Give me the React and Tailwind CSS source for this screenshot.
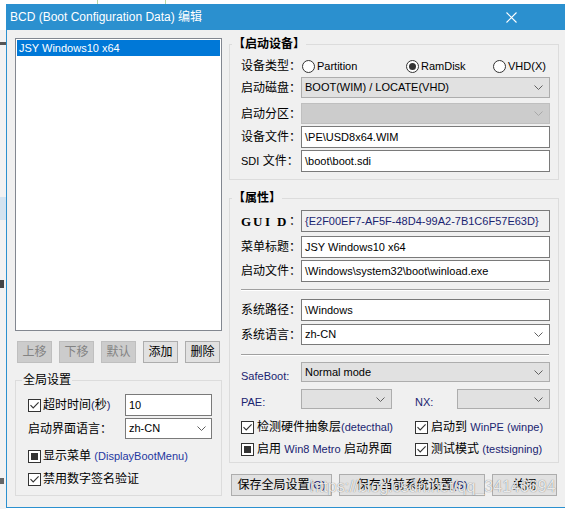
import React from "react";

function Check({ state = "checked" }) {
  return (
    <span className="flex h-[13px] w-[13px] shrink-0 items-center justify-center border border-[#333333] bg-white">
      {state === "checked" && (
        <svg width="11" height="11" viewBox="0 0 11 11">
          <path d="M1.5 5.2 L4.2 8 L9.6 2.4" fill="none" stroke="#333333" strokeWidth="1.1" />
        </svg>
      )}
      {state === "ind" && <span className="h-[7px] w-[7px] bg-[#333333]" />}
    </span>
  );
}

function Radio({ checked }) {
  return (
    <span className="flex h-[13px] w-[13px] shrink-0 items-center justify-center rounded-full border border-[#333333] bg-white">
      {checked && <span className="h-[7px] w-[7px] rounded-full bg-[#333333]" />}
    </span>
  );
}

function Chevron({ color = "#606060" }) {
  return (
    <svg width="9" height="5" viewBox="0 0 9 5" className="shrink-0">
      <path d="M0.5 0.5 L4.5 4.5 L8.5 0.5" fill="none" stroke={color} strokeWidth="1" />
    </svg>
  );
}

function L({ children, className = "" }) {
  return <span className={"text-[11px] " + className}>{children}</span>;
}

function Btn({ children, disabled, className = "" }) {
  return (
    <div
      className={
        "flex h-[22px] items-center justify-center border " +
        (disabled
          ? "border-[#bfbfbf] bg-[#cccccc] text-[#838383] "
          : "border-[#adadad] bg-[#e1e1e1] text-black ") +
        className
      }
    >
      {children}
    </div>
  );
}

const NAVY = "text-[#1a2470]";
const BLUE = "text-[#1f37a0]";

export default function App() {
  return (
    <div className="relative h-[509px] w-[565px] overflow-hidden bg-white font-['Liberation_Sans','Noto_Sans_CJK_SC',sans-serif] text-[12px] leading-none text-black">
      {/* top strip (behind window) */}
      <div className="flex h-[4px] bg-white">
        <div className="ml-[97px] h-[4px] w-[69px] border-x border-[#b8d8a0]" />
      </div>
      <div className="flex h-[505px]">
        {/* left strip (behind window) */}
        <div className="flex w-[6px] flex-col bg-[#f2f2f2]">
          <div className="h-[26px] bg-white" />
          <div className="mt-[12px] h-[3px] bg-[#555555]" />
          <div className="mt-[152px] h-[23px] bg-[#d3e3f0]" />
          <div className="mt-[60px] h-[8px] w-[4px] bg-[#444444]" />
          <div className="mt-[190px] h-[6px] w-[4px] bg-[#666666]" />
        </div>

        {/* window */}
        <div className="flex h-[504px] flex-1 flex-col">
          <div className="flex h-[26px] shrink-0 items-center justify-between bg-[#2b90cf] pl-[4px] pr-[48px] text-white">
            <span className="text-[12px]">BCD (Boot Configuration Data) 编辑</span>
            <svg width="11" height="11" viewBox="0 0 11 11">
              <path d="M0.5 0.5 L10.5 10.5 M10.5 0.5 L0.5 10.5" stroke="white" strokeWidth="1.1" />
            </svg>
          </div>

          <div className="flex h-[478px] items-start gap-[7px] border-b border-l border-[#2b90cf] bg-[#f0f0f0] pl-[8px]">
            {/* left column */}
            <div className="flex w-[207px] shrink-0 flex-col pt-[8px]">
              <div className="h-[293px] border border-[#828790] bg-white p-[1px]">
                <div className="flex h-[16px] items-center bg-[#0078d7] pl-[2px] text-white">
                  <L>JSY Windows10 x64</L>
                </div>
              </div>
              <div className="mt-[10px] flex justify-between px-[2px]">
                <Btn disabled className="w-[35px]">上移</Btn>
                <Btn disabled className="w-[35px]">下移</Btn>
                <Btn disabled className="w-[35px]">默认</Btn>
                <Btn className="w-[35px]">添加</Btn>
                <Btn className="w-[35px]">删除</Btn>
              </div>
              <fieldset className="mt-[9px] border border-[#dcdcdc] px-0 pb-[8px]">
                <legend className="ml-[6px] px-[1px] leading-[16px]">全局设置</legend>
                <div className="flex flex-col pl-[12px] pr-[9px]">
                  <div className="mt-[6px] flex h-[22px] items-center justify-between">
                    <div className="flex items-center">
                      <Check />
                      <span className="ml-[2px]">超时时间<L className={NAVY}>(</L>秒<L className={NAVY}>)</L></span>
                    </div>
                    <div className="h-[22px] w-[87px] border border-[#7a7a7a] bg-white pl-[3px] pt-[4px]">
                      <L>10</L>
                    </div>
                  </div>
                  <div className="mt-[2px] flex h-[21px] items-center justify-between">
                    <span>启动界面语言：</span>
                    <div className="flex h-[21px] w-[87px] items-center justify-between border border-[#7a7a7a] bg-white pl-[3px] pr-[5px]">
                      <L>zh-CN</L>
                      <Chevron />
                    </div>
                  </div>
                  <div className="mt-[9px] flex h-[16px] items-center">
                    <Check state="ind" />
                    <span className="ml-[2px]">显示菜单 <L className={BLUE}>(DisplayBootMenu)</L></span>
                  </div>
                  <div className="mt-[7px] flex h-[16px] items-center">
                    <Check />
                    <span className="ml-[2px]">禁用数字签名验证</span>
                  </div>
                </div>
              </fieldset>
            </div>

            {/* right column */}
            <div className="flex w-[330px] shrink-0 flex-col pt-[6px]">
              <fieldset className="border border-[#dcdcdc] px-0 pb-[7px]">
                <legend className="ml-[2px] px-[1px] font-bold leading-[16px]">【启动设备】</legend>
                <div className="flex flex-col pl-[11px] pr-[8px]">
                  <div className="mt-[6px] flex h-[16px] items-center">
                    <span className="w-[60px] shrink-0">设备类型：</span>
                    <div className="flex w-[105px] items-center pl-[1px]">
                      <Radio />
                      <L className="ml-[2px]">Partition</L>
                    </div>
                    <div className="flex w-[87px] items-center">
                      <Radio checked />
                      <L className="ml-[2px]">RamDisk</L>
                    </div>
                    <div className="flex items-center">
                      <Radio />
                      <L className="ml-[2px]">VHD(X)</L>
                    </div>
                  </div>
                  <div className="mt-[3px] flex h-[21px] items-center">
                    <span className="w-[60px] shrink-0">启动磁盘：</span>
                    <div className="flex h-[21px] flex-1 items-center justify-between border border-[#adadad] bg-[#e1e1e1] pl-[3px] pr-[6px]">
                      <L>BOOT(WIM) / LOCATE(VHD)</L>
                      <Chevron />
                    </div>
                  </div>
                  <div className="mt-[5px] flex h-[21px] items-center">
                    <span className="w-[60px] shrink-0">启动分区：</span>
                    <div className="flex h-[21px] flex-1 items-center justify-end border border-[#bfbfbf] bg-[#cccccc] pr-[6px]">
                      <Chevron color="#a8a8a8" />
                    </div>
                  </div>
                  <div className="mt-[2px] flex h-[22px] items-center">
                    <span className="w-[60px] shrink-0">设备文件：</span>
                    <div className="flex h-[22px] flex-1 items-center border border-[#7a7a7a] bg-white pl-[3px]">
                      <L>\PE\USD8x64.WIM</L>
                    </div>
                  </div>
                  <div className="mt-[2px] flex h-[22px] items-center">
                    <span className="w-[60px] shrink-0"><L>SDI</L> 文件：</span>
                    <div className="flex h-[22px] flex-1 items-center border border-[#7a7a7a] bg-white pl-[3px]">
                      <L>\boot\boot.sdi</L>
                    </div>
                  </div>
                </div>
              </fieldset>

              <fieldset className="mt-[10px] border border-[#dcdcdc] px-0 pb-[5px]">
                <legend className="ml-[2px] px-[1px] font-bold leading-[16px]">【属性】</legend>
                <div className="flex flex-col pl-[11px] pr-[8px]">
                  <div className="mt-[4px] flex h-[22px] items-center">
                    <span className="flex w-[60px] shrink-0 items-center">
                      <span className="flex font-['Liberation_Serif',serif] text-[13px] font-bold">
                        <span className="w-[12px]">G</span>
                        <span className="w-[12px]">U</span>
                        <span className="w-[12px]">I</span>
                        <span className="w-[12px]">D</span>
                      </span>
                      <span>：</span>
                    </span>
                    <div className="flex h-[22px] flex-1 items-center border border-[#7a7a7a] bg-[#f0f0f0] pl-[3px]">
                      <L className={NAVY}>{"{E2F00EF7-AF5F-48D4-99A2-7B1C6F57E63D}"}</L>
                    </div>
                  </div>
                  <div className="mt-[4px] flex h-[22px] items-center">
                    <span className="w-[60px] shrink-0">菜单标题：</span>
                    <div className="flex h-[22px] flex-1 items-center border border-[#7a7a7a] bg-white pl-[3px]">
                      <L>JSY Windows10 x64</L>
                    </div>
                  </div>
                  <div className="mt-[2px] flex h-[22px] items-center">
                    <span className="w-[60px] shrink-0">启动文件：</span>
                    <div className="flex h-[22px] flex-1 items-center border border-[#7a7a7a] bg-white pl-[3px]">
                      <L>\Windows\system32\boot\winload.exe</L>
                    </div>
                  </div>
                  <div className="mr-[1px] mt-[7px] h-px bg-[#a0a0a0]" />
                  <div className="mr-[1px] h-px bg-white" />
                  <div className="mt-[8px] flex h-[22px] items-center">
                    <span className="w-[60px] shrink-0">系统路径：</span>
                    <div className="flex h-[22px] flex-1 items-center border border-[#7a7a7a] bg-white pl-[3px]">
                      <L>\Windows</L>
                    </div>
                  </div>
                  <div className="mt-[3px] flex h-[21px] items-center">
                    <span className="w-[60px] shrink-0">系统语言：</span>
                    <div className="flex h-[21px] flex-1 items-center justify-between border border-[#7a7a7a] bg-white pl-[3px] pr-[6px]">
                      <L>zh-CN</L>
                      <Chevron />
                    </div>
                  </div>
                  <div className="mr-[1px] mt-[9px] h-px bg-[#a0a0a0]" />
                  <div className="mr-[1px] h-px bg-white" />
                  <div className="mt-[6px] flex h-[20px] items-center">
                    <span className="w-[60px] shrink-0 pt-[7px]">
                      <L className={NAVY}>SafeBoot:</L>
                    </span>
                    <div className="flex h-[20px] flex-1 items-center justify-between border border-[#adadad] bg-[#e1e1e1] pl-[3px] pr-[6px]">
                      <L>Normal mode</L>
                      <Chevron />
                    </div>
                  </div>
                  <div className="mt-[7px] flex h-[20px] items-center">
                    <span className="w-[60px] shrink-0 pt-[6px]">
                      <L className={NAVY}>PAE:</L>
                    </span>
                    <div className="flex h-[20px] w-[91px] items-center justify-end border border-[#adadad] bg-[#e1e1e1] pr-[6px]">
                      <Chevron />
                    </div>
                    <span className="ml-[23px] w-[42px] shrink-0 pt-[6px]">
                      <L className={NAVY}>NX:</L>
                    </span>
                    <div className="flex h-[20px] flex-1 items-center justify-end border border-[#adadad] bg-[#e1e1e1] pr-[6px]">
                      <Chevron />
                    </div>
                  </div>
                  <div className="mt-[10px] flex h-[16px] items-center">
                    <div className="flex w-[174px] items-center">
                      <Check />
                      <span className="ml-[3px]">检测硬件抽象层<L className={NAVY}>(detecthal)</L></span>
                    </div>
                    <div className="flex items-center">
                      <Check />
                      <span className="ml-[3px]">启动到 <L className={NAVY}>WinPE (winpe)</L></span>
                    </div>
                  </div>
                  <div className="mt-[6px] flex h-[16px] items-center">
                    <div className="flex w-[174px] items-center">
                      <Check state="ind" />
                      <span className="ml-[3px]">启用 <L className={NAVY}>Win8 Metro</L> 启动界面</span>
                    </div>
                    <div className="flex items-center">
                      <Check />
                      <span className="ml-[3px]">测试模式 <L className={NAVY}>(testsigning)</L></span>
                    </div>
                  </div>
                </div>
              </fieldset>

              <div className="mt-[11px] flex">
                <Btn className="ml-[2px] w-[101px]">保存全局设置<L className={NAVY}>(G)</L></Btn>
                <Btn className="ml-[7px] w-[146px]">保存当前系统设置<L className={NAVY}>(S)</L></Btn>
                <Btn className="ml-[7px] w-[65px]">关闭</Btn>
              </div>
            </div>
          </div>
        </div>
      </div>

      {/* watermark overlay */}
      <div className="pointer-events-none absolute left-[310px] top-[478px] font-['Liberation_Sans',sans-serif] text-[16px] leading-[18px] text-white/85 [text-shadow:0_0_1px_rgba(0,0,0,0.6)]">
        https://blog.csdn.net/qq_34146694
      </div>
    </div>
  );
}
